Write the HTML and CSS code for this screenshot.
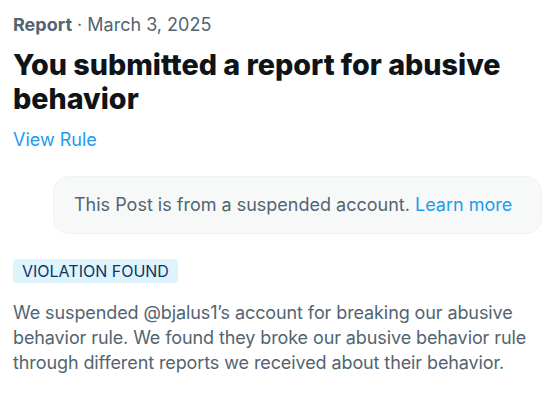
FILE: index.html
```html
<!DOCTYPE html>
<html lang="en">
<head>
  <meta charset="UTF-8">
  <meta name="viewport" content="width=device-width, initial-scale=1.0">
  <title>Report</title>
  <link rel="stylesheet" href="styles.css">
</head>
<body>
  <div class="report">
    <div class="meta"><span class="meta-type">Report</span> · March 3, 2025</div>
    <h1 class="title">You submitted a report for abusive behavior</h1>
    <a class="rule-link" href="#">View Rule</a>

    <div class="notice">
      This Post is from a suspended account. <a href="#">Learn more</a>
    </div>

    <span class="badge">VIOLATION FOUND</span>

    <p class="body-text">We suspended @bjalus1’s account for breaking our abusive behavior rule. We found they broke our abusive behavior rule through different reports we received about their behavior.</p>
    <p class="body-text">Thanks again for letting us know. Reports like yours help us keep the conversation healthy.</p>
  </div>
</body>
</html>
```

FILE: styles.css
```css
body {
  margin: 0;
  font-family: Inter, "Noto Sans", sans-serif;
  background: #fff;
  color: #0f1419;
  overflow: hidden;
}

.report {
  padding: 13px 13px 0 13px;
}

.meta {
  font-size: 18px;
  line-height: 24px;
  color: #536471;
}
.meta-type {
  font-weight: 700;
}

.title {
  margin: 11px 0 0;
  font-size: 28.7px;
  line-height: 34px;
  font-weight: 800;
}

.rule-link {
  display: inline-block;
  margin-top: 12px;
  font-size: 18px;
  line-height: 24px;
  color: #1d9bf0;
  text-decoration: none;
}

.notice {
  margin: 24px -12px 0 40px;
  padding: 16px 20px;
  font-size: 18px;
  line-height: 24px;
  color: #536471;
  background: #f7f9f9;
  border: 1px solid #eff3f4;
  border-radius: 16px;
}
.notice a {
  color: #1d9bf0;
  text-decoration: none;
}

.badge {
  display: inline-block;
  margin-top: 25px;
  padding: 2px 9px;
  font-size: 16px;
  line-height: 20px;
  color: #0a3766;
  background: #dff3fd;
  border-radius: 4px;
}

.body-text {
  margin: 17px 0 0;
  font-size: 18px;
  line-height: 25px;
  letter-spacing: -0.1px;
  color: #536471;
}
.body-text + .body-text {
  margin-top: 25px;
}
```
